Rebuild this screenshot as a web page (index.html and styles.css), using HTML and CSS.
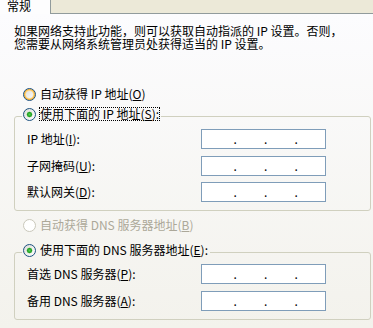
FILE: index.html
```html
<!doctype html>
<html>
  <head>
    <meta charset="utf-8">
    <link rel="stylesheet" href="styles.css">
  </head>
  <body>
    <div class="tabs">
      <div class="tab">常规</div>
      <div class="tab-rest"></div>
    </div>

    <div class="panel">
      <p class="intro">如果网络支持此功能，则可以获取自动指派的 IP 设置。否则，<br>您需要从网络系统管理员处获得适当的 IP 设置。</p>

      <label class="radio hot first">
        <input type="radio" name="ip">
        <span class="caption">自动获得 IP 地址(<u>O</u>)</span>
      </label>

      <fieldset class="group">
        <legend>
          <label class="radio">
            <input type="radio" name="ip" checked>
            <span class="caption focus">使用下面的 IP 地址(<u>S</u>):</span>
          </label>
        </legend>
        <div class="rows">
          <span>IP 地址(<u>I</u>):</span>
          <div class="ip-field"><span class="octet"></span><span class="dot">.</span><span class="octet"></span><span class="dot">.</span><span class="octet"></span><span class="dot">.</span><span class="octet"></span></div>
          <span>子网掩码(<u>U</u>):</span>
          <div class="ip-field"><span class="octet"></span><span class="dot">.</span><span class="octet"></span><span class="dot">.</span><span class="octet"></span><span class="dot">.</span><span class="octet"></span></div>
          <span>默认网关(<u>D</u>):</span>
          <div class="ip-field"><span class="octet"></span><span class="dot">.</span><span class="octet"></span><span class="dot">.</span><span class="octet"></span><span class="dot">.</span><span class="octet"></span></div>
        </div>
      </fieldset>

      <label class="radio disabled dns-auto">
        <input type="radio" name="dns" disabled>
        <span class="caption">自动获得 DNS 服务器地址(<u>B</u>)</span>
      </label>

      <fieldset class="group group-dns">
        <legend>
          <label class="radio">
            <input type="radio" name="dns" checked>
            <span class="caption">使用下面的 DNS 服务器地址(<u>E</u>):</span>
          </label>
        </legend>
        <div class="rows">
          <span>首选 DNS 服务器(<u>P</u>):</span>
          <div class="ip-field"><span class="octet"></span><span class="dot">.</span><span class="octet"></span><span class="dot">.</span><span class="octet"></span><span class="dot">.</span><span class="octet"></span></div>
          <span>备用 DNS 服务器(<u>A</u>):</span>
          <div class="ip-field"><span class="octet"></span><span class="dot">.</span><span class="octet"></span><span class="dot">.</span><span class="octet"></span><span class="dot">.</span><span class="octet"></span></div>
        </div>
      </fieldset>
    </div>
  </body>
</html>
```

FILE: styles.css
```css
body {
  margin: 0;
  width: 373px;
  height: 328px;
  overflow: hidden;
  font-family: "Noto Sans CJK SC", sans-serif;
  font-size: 12px;
  line-height: 12px;
  color: #000000;
  background: #F4F3EE;
}

.tabs {
  display: flex;
  height: 14px;
}
.tab {
  width: 50px;
  padding-left: 7px;
  box-sizing: border-box;
  line-height: 12px;
  background: #FDFDFE;
}
.tab-rest {
  flex: 1;
  background: #ECE9D8;
  border-left: 1px solid #919B9C;
  border-bottom: 1px solid #919B9C;
}

.panel {
  height: 314px;
  padding-top: 10px;
  box-sizing: border-box;
  background: linear-gradient(#FCFCFE, #F3F2EC);
}

.intro {
  margin: 0 0 0 14px;
  line-height: 13px;
}

.radio {
  display: flex;
  align-items: center;
  gap: 3px;
  height: 14px;
}
.radio.first {
  margin: 37px 0 0 23px;
}
.radio.dns-auto {
  margin: 7px 0 0 23px;
}
.radio input {
  -webkit-appearance: none;
  appearance: none;
  flex: none;
  width: 13px;
  height: 13px;
  margin: 0;
  box-sizing: border-box;
  border: 1px solid #1C5180;
  border-radius: 50%;
  background: linear-gradient(135deg, #DCDCD7, #FFFFFF);
}
.radio.hot input {
  box-shadow: inset 0 0 0 1px #F7B236, inset 0 0 0 2px #FCD990;
}
.radio input:checked {
  background:
    radial-gradient(circle, #55D155 0, #21A121 2px, #6CC06C 2.6px, transparent 3.2px),
    linear-gradient(135deg, #DCDCD7, #FFFFFF);
}
.radio input:disabled {
  border-color: #CAC8BB;
  background: #FFFFFF;
}
.radio.disabled .caption {
  color: #ACA899;
}
.caption {
  border: 1px dotted transparent;
  white-space: nowrap;
}
.caption.focus {
  border-color: #000000;
}

.group {
  margin: 6px 2px 0 14px;
  padding: 0;
  min-width: 0;
  border: 1px solid #D0D0BF;
  border-radius: 3px;
}
.group-dns {
  margin-top: 11px;
}
.group legend {
  margin-left: 7px;
  padding: 0 1px 4px;
}

.rows {
  display: grid;
  grid-template-columns: 174px 125px;
  align-items: center;
  row-gap: 6.5px;
  padding: 4px 0 8px 12px;
}
.group-dns .rows {
  padding-top: 3px;
}

.ip-field {
  display: flex;
  height: 20px;
  box-sizing: border-box;
  padding-left: 4px;
  border: 1px solid #7F9DB9;
  background: #FFFFFF;
  line-height: 18px;
}
.octet {
  width: 28px;
}
.dot {
  width: 3px;
  overflow: visible;
}
```
